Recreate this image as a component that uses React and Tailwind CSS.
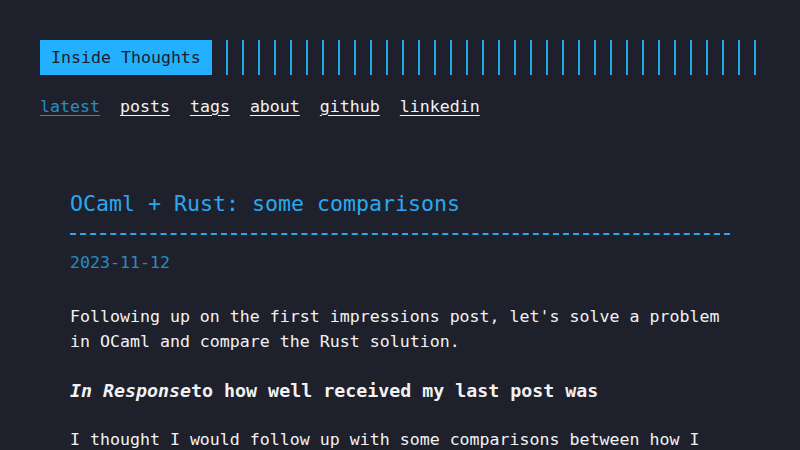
import React from 'react';

const NAV = [
  { label: 'latest', active: true },
  { label: 'posts' },
  { label: 'tags' },
  { label: 'about' },
  { label: 'github' },
  { label: 'linkedin' },
];

export default function App() {
  return (
    <div className="min-h-[450px] bg-[#1e212c] text-[#f2f2f2] font-['DejaVu_Sans_Mono',monospace] text-[16.6px] leading-[25px]">
      <div className="mx-[40px] pt-[40px]">
        <header>
          <div className="flex items-stretch h-[35px]">
            <div className="bg-[#23b0ff] text-[#1e212c] px-[11px] flex items-center">Inside Thoughts</div>
            <div className="ml-[14px] w-[532px] bg-[repeating-linear-gradient(90deg,#23a7ee_0px,#23a7ee_2px,transparent_2px,transparent_16px)]" />
          </div>
          <nav className="mt-[19px] flex gap-[20px]">
            {NAV.map((n) => (
              <a
                key={n.label}
                href="#"
                className={`underline underline-offset-[3px] ${n.active ? 'text-[#2c8bc6]' : 'text-[#f2f2f2]'}`}
              >
                {n.label}
              </a>
            ))}
          </nav>
        </header>

        <main className="mx-[30px] mt-[70px] w-[660px]">
          <h1 className="text-[21.6px] leading-[30px] text-[#2aa8ef] pb-[14px] border-b-2 border-dashed border-[#2aa8ef]">
            OCaml + Rust: some comparisons
          </h1>
          <div className="mt-[15px] text-[#2c8bc6]">2023-11-12</div>
          <p className="mt-[29px]">
            Following up on the first impressions post, let's solve a problem in OCaml and compare the Rust solution.
          </p>
          <h2 className="mt-[24px] text-[18.3px] leading-[25px] font-bold">
            <em>In Response</em>to how well received my last post was
          </h2>
          <p className="mt-[24px]">
            I thought I would follow up with some comparisons between how I approached the problem in both languages.
          </p>
        </main>
      </div>
    </div>
  );
}
